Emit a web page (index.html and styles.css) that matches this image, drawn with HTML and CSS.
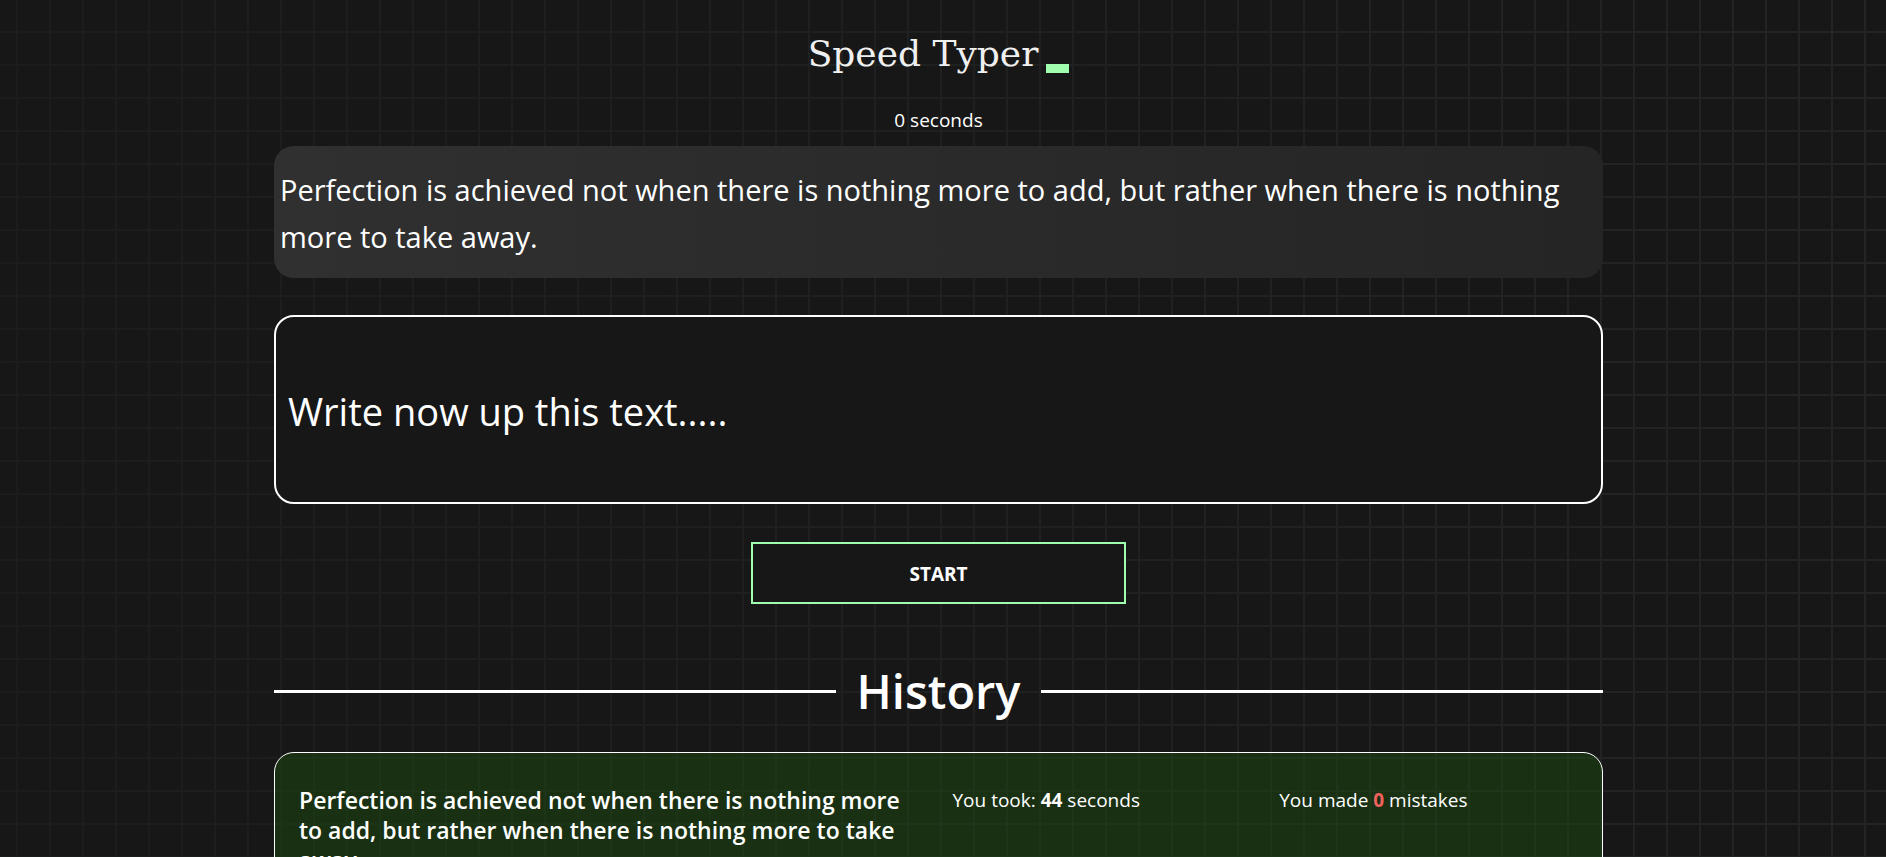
FILE: index.html
```html
<!DOCTYPE html>
<html lang="en">
<head>
<meta charset="utf-8">
<title>Speed Typer</title>
<meta name="viewport" content="width=device-width, initial-scale=1">
<link rel="stylesheet" href="styles.css">
</head>
<body>
<main class="page">
  <header class="header">
    <h1 class="logo"><span class="logo-text">Speed Typer</span><span class="cursor"></span></h1>
    <p class="timer">0 seconds</p>
  </header>
  <p class="quote" id="quote">Perfection is achieved not when there is nothing more to add, but rather when there is nothing more to take away.</p>
  <input class="typing" type="text" aria-labelledby="quote" placeholder="Write now up this text.....">
  <button class="start" type="button">START</button>
  <section class="history">
    <h2 class="history-title">History</h2>
    <article class="result">
      <h3 class="result-title">Perfection is achieved not when there is nothing more to add, but rather when there is nothing more to take away.</h3>
      <p class="result-stat">You took: <b>44</b> seconds</p>
      <p class="result-stat">You made <b class="mistakes">0</b> mistakes</p>
    </article>
  </section>
</main>
</body>
</html>
```
FILE: styles.css
```css
* {
  box-sizing: border-box;
}

html {
  height: 100%;
  overflow: hidden;
}

body {
  height: 100%;
  margin: 0;
  padding-right: 9px;
  overflow: hidden;
  color: #fff;
  font-family: "Open Sans", "Noto Sans", sans-serif;
  font-size: 19px;
  background-color: #171717;
  background-image:
    linear-gradient(90deg, rgba(23, 23, 23, 0.6), rgba(23, 23, 23, 0)),
    linear-gradient(#222524 2px, transparent 2px),
    linear-gradient(90deg, #222524 2px, transparent 2px);
  background-size: 100% 100%, 33px 33px, 33px 33px;
  background-position: 0 0, 0 31px, 16px 0;
}

.page {
  width: 71%;
  max-width: 1329px;
  margin: 0 auto;
  display: flex;
  flex-direction: column;
}

.header {
  display: flex;
  flex-direction: column;
  align-items: center;
  padding-top: 24px;
}

.logo {
  display: flex;
  align-items: flex-end;
  gap: 8px;
  margin: 0;
  color: #f0f0f0;
  font-family: "DejaVu Serif", serif;
  font-size: 36px;
  font-weight: 400;
  line-height: 60px;
}

.cursor {
  width: 23px;
  height: 9px;
  margin-bottom: 11px;
  background: #9fffae;
}

.timer {
  margin: 22px 0 12px;
  line-height: 28px;
}

.quote {
  margin: 0;
  padding: 20px 6px 18px;
  border-radius: 20px;
  background: linear-gradient(90deg, #303030, #252525);
  font-size: 29px;
  line-height: 47px;
}

.typing {
  width: 100%;
  height: 189px;
  margin-top: 37px;
  padding: 3px 12px 0;
  border: 2px solid #fff;
  border-radius: 20px;
  background: #171717;
  color: #fff;
  font: inherit;
  font-size: 38px;
}

.typing::placeholder {
  color: #fff;
  opacity: 1;
}

.start {
  align-self: center;
  width: 375px;
  height: 62px;
  margin-top: 38px;
  padding: 2px 0 0;
  border: 2px solid #9fffae;
  background: #171717;
  color: #fff;
  font: inherit;
  font-weight: 700;
}

.history-title {
  display: flex;
  align-items: center;
  gap: 20px;
  margin: 50px 0 24px;
  font-size: 47px;
  font-weight: 600;
  line-height: 74px;
}

.history-title::before,
.history-title::after {
  content: "";
  flex: 1;
  height: 3px;
  background: #fff;
}

.result {
  display: grid;
  grid-template-columns: repeat(4, minmax(0, 1fr));
  column-gap: 28px;
  padding: 32px 24px;
  border: 1px solid #fff;
  border-radius: 20px;
  background: rgba(27, 74, 15, 0.5);
}

.result-title {
  grid-column: span 2;
  margin: 0;
  font-size: 23px;
  font-weight: 600;
  line-height: 30px;
}

.result-stat {
  margin: 0;
  line-height: 30px;
}

.mistakes {
  color: #f0625f;
}
```
